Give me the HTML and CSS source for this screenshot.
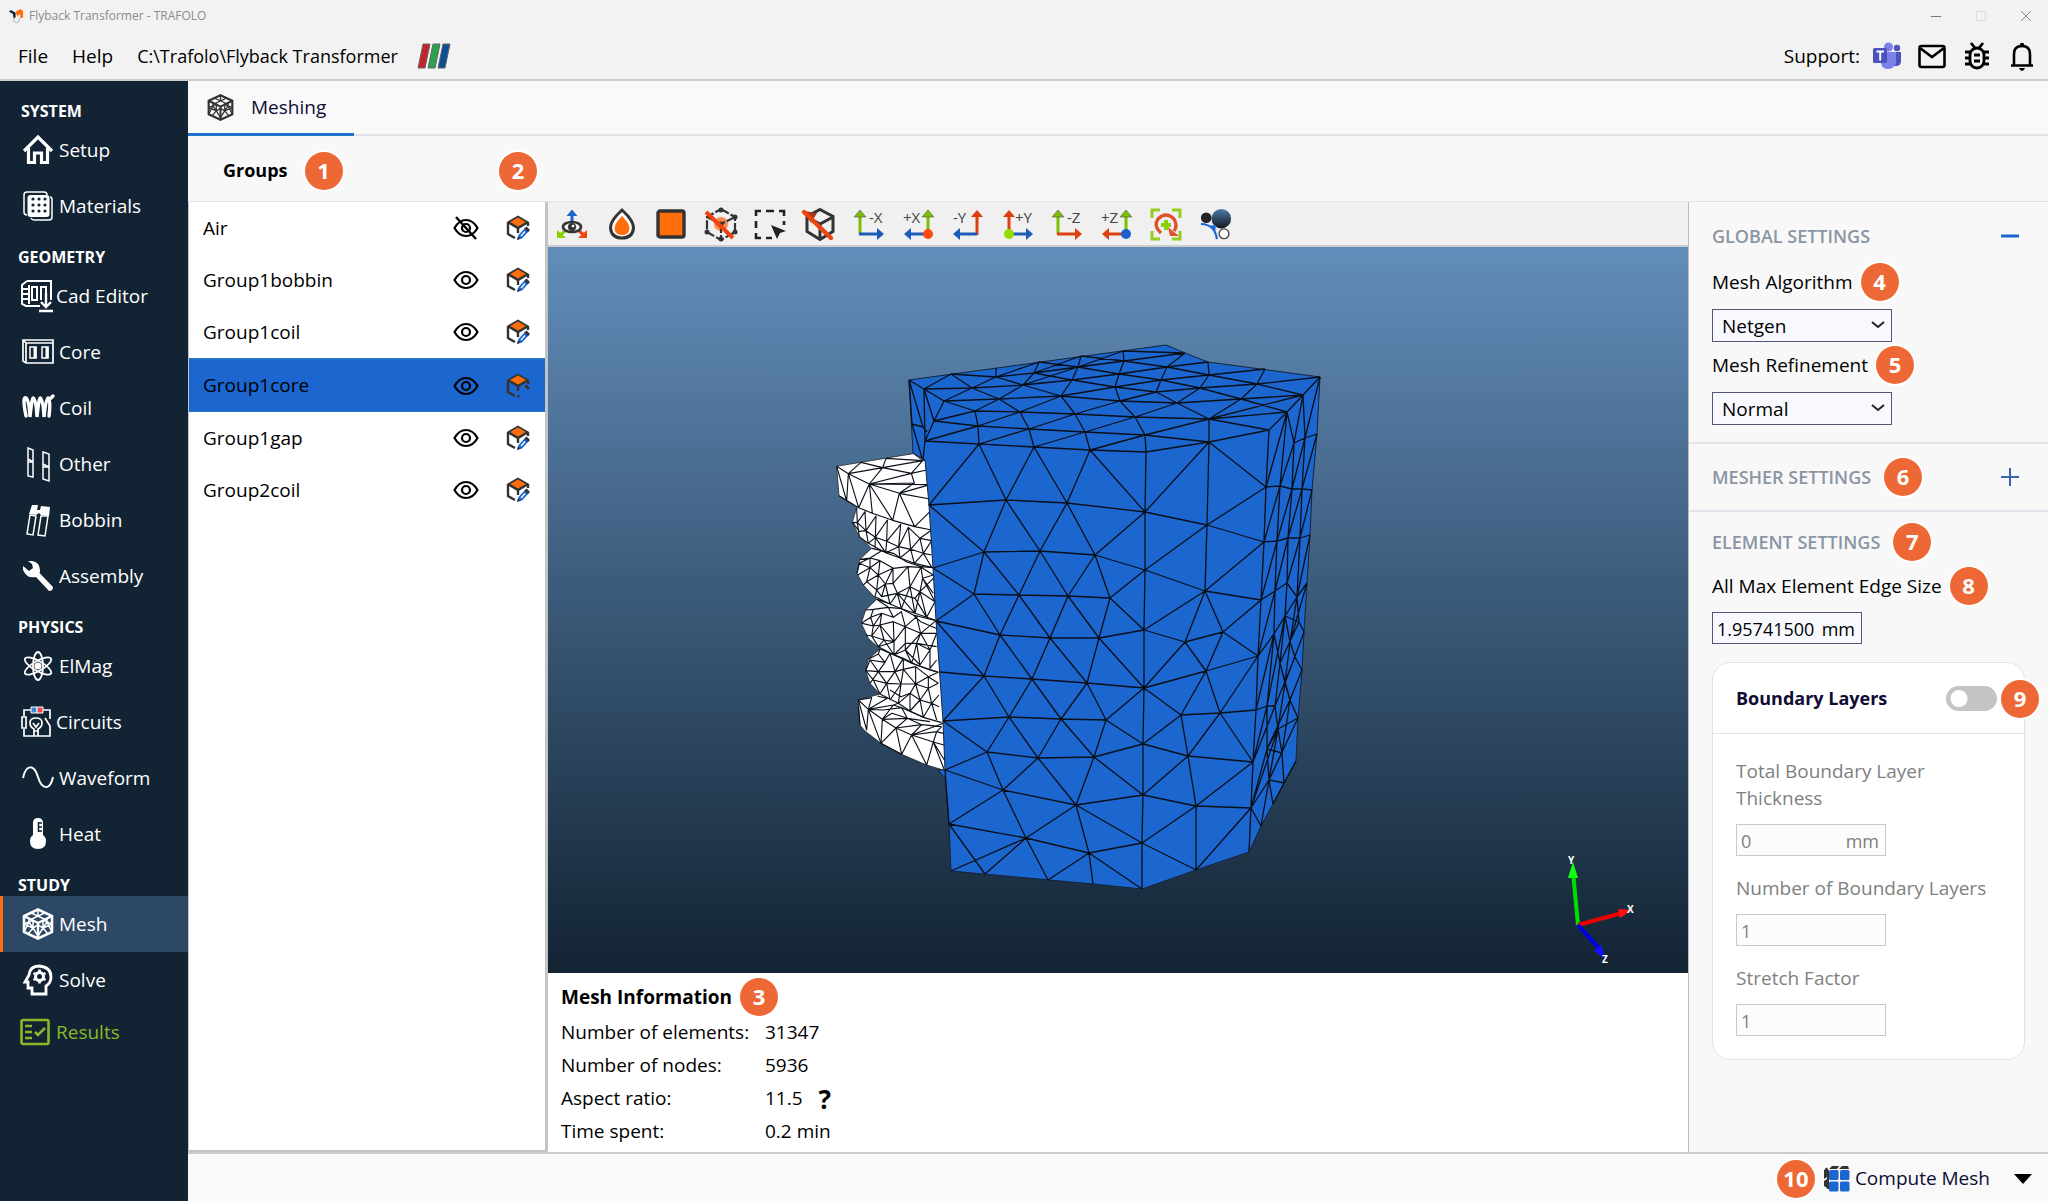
FILE: index.html
```html
<!DOCTYPE html>
<html lang="en">
<head>
<meta charset="utf-8">
<title>Flyback Transformer - TRAFOLO</title>
<link rel="stylesheet" href="styles.css">
</head>
<body>
<svg class="defs" aria-hidden="true">
  <symbol id="i-eye" viewBox="0 0 26 20"><path d="M1.500 10Q6 2 13 2t11.500 8Q20 18 13 18T1.500 10z" fill="none" stroke="currentColor" stroke-width="2.200"/><circle cx="13" cy="10" r="4" fill="none" stroke="currentColor" stroke-width="2.200"/></symbol>
  <symbol id="i-eye-off" viewBox="0 0 26 24"><path d="M1.500 12Q6 4 13 4t11.500 8Q20 20 13 20T1.500 12z" fill="none" stroke="currentColor" stroke-width="2.200"/><circle cx="13" cy="12" r="4" fill="none" stroke="currentColor" stroke-width="2.200"/><path d="M3 1L23 23" stroke="currentColor" stroke-width="2.400"/></symbol>
  <symbol id="i-edit" viewBox="0 0 24 26"><path class="cube-face" d="M2 7v12l10 6V13z"/><path d="M2 7v12l7 4M12 12v6M22 7v4M2 7l10 6 10-6" fill="none" stroke="#333" stroke-width="2.400"/><path d="M12 1.500L21.500 7 12 12.500 2.500 7z" fill="#ff6e0c" stroke="#333" stroke-width="1.600"/><path d="M11 25l1.500-5 7-7.500 3.500 3.500-7 7.500z" fill="#1c66cf"/><path d="M19.500 12.500l3.500 3.500" stroke="#333" stroke-width="3"/><path d="M11 25l1-3.500 2.500 2z" fill="#333"/><path class="cube-face" d="M14.500 20.500l4-4.500 1 1-4 4.500z"/></symbol>
  <symbol id="i-mesh" viewBox="0 0 32 32"><path d="M16 1.500l14 6.500v16L16 30.500 2 24V8z" fill="none" stroke="currentColor" stroke-width="2.600"/><path d="M2 8l14 7 14-7M16 15v15" fill="none" stroke="currentColor" stroke-width="2.400"/><path d="M9 5l7 3 7-3M16 2v6l-7 3.500M16 8l7 3.500M2 16l5-2 4 6 5-3M2 24l5-10 0-4M7 14l4-2 0 8-5 6M11 20l5 8M2 16l9 4M30 16l-5-2-4 6-5-3M30 24l-5-10 0-4M25 14l-4-2 0 8 5 6M21 20l-5 8M30 16l-9 4" fill="none" stroke="currentColor" stroke-width="1.500"/></symbol>
</svg>

<header class="titlebar">
  <svg class="app-icon" viewBox="0 0 16 16"><path d="M2 2l5 3v5L5 11 4 6 0 4z" fill="#0f2133"/><path d="M7 4l5-3 3 2v7l-3 1V7L9 8v2z" fill="#ff6e0c"/><path d="M5 11v3l3 2 3-2v-3" fill="none" stroke="#aaa"/></svg>
  <span class="title">Flyback Transformer - TRAFOLO</span>
  <div class="window-controls">
    <button aria-label="Minimize"><svg viewBox="0 0 12 12"><path d="M1 6.500h10" stroke="#777"/></svg></button>
    <button aria-label="Maximize"><svg viewBox="0 0 12 12"><path d="M1.500 1.500h9v9h-9z" fill="none" stroke="#ddd"/></svg></button>
    <button aria-label="Close"><svg viewBox="0 0 12 12"><path d="M1 1l10 10M11 1L1 11" stroke="#888"/></svg></button>
  </div>
</header>

<nav class="menubar">
  <button class="menu">File</button>
  <button class="menu">Help</button>
  <span class="path">C:\Trafolo\Flyback Transformer</span>
  <svg class="paraview" viewBox="0 0 34 26"><path d="M6 1h7L8 25H1z" fill="#c4212a" stroke="#666"/><path d="M16 1h7l-5 24h-7z" fill="#2ba24c" stroke="#666"/><path d="M26 1h7l-5 24h-7z" fill="#0b4f92" stroke="#666"/></svg>
  <div class="support">
    <span class="support-label">Support:</span>
    <button aria-label="Teams"><svg viewBox="0 0 28 28"><circle cx="24" cy="6" r="3.200" fill="#4b53bc"/><path d="M19 10h9v9q0 5-5 5h-4z" fill="#4b53bc"/><circle cx="15.500" cy="5" r="4.500" fill="#7b83eb"/><path d="M8 10h15v10q-1 7-8 7-6 0-7-6z" fill="#7b83eb"/><rect y="6" width="14" height="15" rx="1.500" fill="#4b53bc"/><path d="M3.500 9.500h7.500M7.200 9.500v9" stroke="#fff" stroke-width="2"/></svg></button>
    <button aria-label="Mail"><svg viewBox="0 0 28 28"><rect x="1.500" y="4" width="25" height="21" rx="2" fill="none" stroke="#000" stroke-width="2.600"/><path d="M2 6l12 9 12-9" fill="none" stroke="#000" stroke-width="2.600"/></svg></button>
    <button aria-label="Report a bug"><svg viewBox="0 0 28 28"><rect x="7" y="6" width="14" height="20" rx="7" fill="none" stroke="#000" stroke-width="2.800"/><path d="M2 10h5M2 16h5M2 22h5M21 10h5M21 16h5M21 22h5M8 1l4 5M20 1l-4 5M11 13h6M11 19h6" stroke="#000" stroke-width="2.800"/></svg></button>
    <button aria-label="Notifications"><svg viewBox="0 0 28 28"><path d="M6 23V12q0-8 8-8t8 8v11M3 23.500h22" fill="none" stroke="#000" stroke-width="2.600"/><circle cx="14" cy="3" r="2.200"/><path d="M11 26h6q-1 3-3 3t-3-3z"/></svg></button>
  </div>
</nav>

<div class="app">
  <nav class="sidebar">
    <section>
      <h2>SYSTEM</h2>
      <a href="#setup"><svg viewBox="0 0 32 32"><path d="M2 17L16 3l14 14M6.500 14v14.500h6V19h7v9.500h6V14" fill="none" stroke="#fff" stroke-width="3.200"/></svg>Setup</a>
      <a href="#materials"><svg viewBox="0 0 32 32"><path d="M5 25q-3 0-3-3V5q0-3 3-3h17q3 0 3 3M9 28q1 2 3 2h15q3 0 3-3V10q0-3-2-3" fill="none" stroke="#fff" stroke-width="1.500"/><rect x="5.500" y="5" width="22" height="22" rx="3" fill="#fff"/><g fill="#122333"><circle cx="11" cy="9" r="1.600"/><circle cx="17" cy="9" r="1.600"/><circle cx="23" cy="9" r="1.600"/><circle cx="11" cy="15" r="1.600"/><circle cx="17" cy="15" r="1.600"/><circle cx="23" cy="15" r="1.600"/><circle cx="11" cy="21" r="1.600"/><circle cx="17" cy="21" r="1.600"/><circle cx="23" cy="21" r="1.600"/></g></svg>Materials</a>
    </section>
    <section>
      <h2>GEOMETRY</h2>
      <a href="#cad" class="tight"><svg viewBox="0 0 32 32"><path d="M6 1h24v19M6 1L1 5v19l4 2h14M1 9h7M1 14h7M1 19h7M8 5v19" fill="none" stroke="#fff" stroke-width="2"/><path d="M11 7h5v13h-5zM20 20V7h5v8" fill="none" stroke="#fff" stroke-width="2"/><path d="M25 13v14M20 22l5 5 5-5M18 31h14" fill="none" stroke="#fff" stroke-width="2.400"/></svg>Cad Editor</a>
      <a href="#core"><svg viewBox="0 0 32 32"><path d="M1 4h30v23H4l-3-2zM1 4l3 3v20M4 7h27" fill="none" stroke="#fff" stroke-width="1.700"/><path d="M8 11h6v11H8zM20 11h6v11h-6z" fill="none" stroke="#fff" stroke-width="1.500"/><path d="M13 11v11M25 11v11" stroke="#fff" stroke-width="3"/></svg>Core</a>
      <a href="#coil"><svg viewBox="0 0 32 32"><path d="M4 24Q0 4 4 6q3 2 4 19 2-19 3-19 3 0 4 19 2-19 3-19 3 0 4 19 2-19 4-19 3 2 1 18M29 6l2-2" fill="none" stroke="#fff" stroke-width="3.400" stroke-linecap="round"/></svg>Coil</a>
      <a href="#other"><svg viewBox="0 0 32 32"><path d="M6 0l5 2v27l-5-1zM21 4l6 2v27l-6-2zM6 11l5 3M6 14l5 0M21 16l6 3M21 19l6 0" fill="none" stroke="#fff" stroke-width="1.500"/></svg>Other</a>
      <a href="#bobbin"><svg viewBox="0 0 32 32"><path d="M10 1h6l-1 5h3l1-4 9 1-1 9-8-1-2-2-3 2-7-1z" fill="#fff"/><path d="M8 11l6 1-3 19-6-1zM19 12h7l-3 20-7-1z" fill="none" stroke="#fff" stroke-width="1.500"/></svg>Bobbin</a>
      <a href="#assembly"><svg viewBox="0 0 32 32"><path d="M10 1q8 1 8 10 0 1-.500 2L31 27q0 4-4 4L14 17q-9 2-13-7V6l6 5 4-3-1-4-4-3z" fill="#fff"/></svg>Assembly</a>
    </section>
    <section>
      <h2>PHYSICS</h2>
      <a href="#elmag"><svg viewBox="0 0 32 32"><g fill="none" stroke="#fff" stroke-width="1.800"><ellipse cx="16" cy="16" rx="5" ry="14"/><ellipse cx="16" cy="16" rx="5" ry="15" transform="rotate(60 16 16)"/><ellipse cx="16" cy="16" rx="5" ry="15" transform="rotate(-60 16 16)"/></g><circle cx="16" cy="16" r="3.600" fill="#fff"/></svg>ElMag</a>
      <a href="#circuits" class="tight"><svg viewBox="0 0 32 32"><path d="M11 4H3v6M3 23v7h26V20l-5-8M21 4h8v9M1 11h4v11H1zM13 30v-7q-4-2-4-6 0-5 6-5t6 5q0 4-4 6v7M12 17l3 4 3-4M13 25h5" fill="none" stroke="#fff" stroke-width="1.700"/><path d="M10 1h6v6h-6z" fill="#3c86d6" stroke="#fff"/><path d="M16 1h6v6h-6z" fill="#ee4b55" stroke="#fff"/></svg>Circuits</a>
      <a href="#waveform"><svg viewBox="0 0 32 32"><path d="M1 16C4 2 12 2 16 15s12 14 15 0" fill="none" stroke="#fff" stroke-width="2"/></svg>Waveform</a>
      <a href="#heat"><svg viewBox="0 0 32 32"><path d="M11 5q0-5 5-5t5 5v12q3 2 3 6 0 8-8 8t-8-8q0-4 3-6z" fill="#fff"/><path d="M16.500 4v10M17 5h3M17 9h3M17 13h3" stroke="#122333" stroke-width="1.500"/></svg>Heat</a>
    </section>
    <section>
      <h2>STUDY</h2>
      <a href="#mesh" class="active"><svg><use href="#i-mesh"/></svg>Mesh</a>
      <a href="#solve"><svg viewBox="0 0 32 32"><path d="M10 30v-6H6v-6H3l4-7Q8 2 17 2q12 1 12 11 0 6-5 9v8z" fill="none" stroke="#fff" stroke-width="2.800"/><circle cx="17.500" cy="12.500" r="4" fill="none" stroke="#fff" stroke-width="3"/><path d="M17.500 5.500v3M17.500 16.500v3M11.500 9l2.500 1.500M21 14.500l2.500 1.500M23.500 9L21 10.500M14 14.500L11.500 16" stroke="#fff" stroke-width="2.600"/></svg>Solve</a>
      <a href="#results" class="results"><svg viewBox="0 0 32 32"><rect x="2.500" y="4" width="27" height="24" rx="1.500" fill="none" stroke="currentColor" stroke-width="2.600"/><path d="M6 10h7M6 16h7M6 22h7M16 16l3 3 7-7" fill="none" stroke="currentColor" stroke-width="2.600"/></svg>Results</a>
    </section>
  </nav>

  <main class="content">
    <div class="tabs"><button class="tab"><svg><use href="#i-mesh"/></svg>Meshing</button></div>
    <div class="groups-head"><h1>Groups</h1><span class="badge">1</span><span class="badge last">2</span></div>

    <div class="workspace">
      <ul class="groups">
        <li><span>Air</span><button aria-label="Show Air"><svg class="off"><use href="#i-eye-off"/></svg></button><button aria-label="Edit Air"><svg><use href="#i-edit"/></svg></button></li>
        <li><span>Group1bobbin</span><button aria-label="Hide Group1bobbin"><svg><use href="#i-eye"/></svg></button><button aria-label="Edit Group1bobbin"><svg><use href="#i-edit"/></svg></button></li>
        <li><span>Group1coil</span><button aria-label="Hide Group1coil"><svg><use href="#i-eye"/></svg></button><button aria-label="Edit Group1coil"><svg><use href="#i-edit"/></svg></button></li>
        <li class="selected"><span>Group1core</span><button aria-label="Hide Group1core"><svg><use href="#i-eye"/></svg></button><button aria-label="Edit Group1core"><svg><use href="#i-edit"/></svg></button></li>
        <li><span>Group1gap</span><button aria-label="Hide Group1gap"><svg><use href="#i-eye"/></svg></button><button aria-label="Edit Group1gap"><svg><use href="#i-edit"/></svg></button></li>
        <li><span>Group2coil</span><button aria-label="Hide Group2coil"><svg><use href="#i-eye"/></svg></button><button aria-label="Edit Group2coil"><svg><use href="#i-edit"/></svg></button></li>
      </ul>

      <div class="center">
        <div class="toolbar">
          <button aria-label="Rotation mode"><svg viewBox="0 0 32 32"><path d="M16 14V5" stroke="#1c66cf" stroke-width="3"/><path d="M10.500 8L16 1.500 21.500 8z" fill="#1c66cf"/><path d="M9 23l-5 4" stroke="#8bd000" stroke-width="3"/><path d="M1 22v8h9z" fill="#8bd000"/><path d="M23 23l5 4" stroke="#ee4410" stroke-width="3"/><path d="M31 22v8h-9z" fill="#ee4410"/><ellipse cx="16" cy="19" rx="9" ry="5" fill="none" stroke="#333" stroke-width="2.600"/><circle cx="16" cy="19" r="4" fill="#333"/><circle cx="17" cy="18" r="1.300" fill="#fff"/></svg></button>
          <button aria-label="Opacity"><svg viewBox="0 0 32 32"><path d="M16 2Q4 13 4.500 20q1 10 11.500 10t11.500-10Q28 13 16 2z" fill="#fff" stroke="#333" stroke-width="3"/><path d="M16 8Q8 16 8.500 21q1 6 7.500 6t7.500-6Q24 16 16 8z" fill="#ff6e0c"/></svg></button>
          <button aria-label="Surface"><svg viewBox="0 0 32 32"><rect x="3" y="3" width="26" height="26" rx="2" fill="#ff6e0c" stroke="#333" stroke-width="3.400"/></svg></button>
          <button aria-label="Hide volume mesh"><svg viewBox="0 0 32 32"><circle cx="16" cy="16" r="7" fill="#ff8a50"/><path d="M16 1l14 8v15l-14 8L2 24V9zM2 9l14 7 14-7M16 16v15" fill="none" stroke="#333" stroke-width="2.200" stroke-dasharray="9 2"/><g fill="#333"><circle cx="16" cy="2" r="2.500"/><circle cx="30" cy="9" r="2.500"/><circle cx="30" cy="24" r="2.500"/><circle cx="16" cy="31" r="2.500"/><circle cx="2" cy="24" r="2.500"/><circle cx="16" cy="16" r="2.500"/></g><path d="M1 4l27 26" stroke="#ee4410" stroke-width="4"/></svg></button>
          <button aria-label="Box select"><svg viewBox="0 0 32 32"><path d="M2 8V3h5M12 3h8M25 3h5v5M30 13v4M2 13v7M2 25v5h5M12 30h6" fill="none" stroke="#222" stroke-width="2.600"/><path d="M17 17l15 6-6 2-3 6z" fill="#222"/></svg></button>
          <button aria-label="Hide solid"><svg viewBox="0 0 32 32"><path d="M16 1.500l13 7v15l-13 8-13-8v-15zM3 9l13 7 13-7M16 16v15" fill="none" stroke="#333" stroke-width="3"/><path d="M0 3l13 2-6 10z" fill="#a3371b"/><path d="M0 4l27 26" stroke="#ee4410" stroke-width="4.400" stroke-linecap="round"/></svg></button>
          <button aria-label="View from minus X"><svg viewBox="0 0 32 32"><path d="M7 26V7" stroke="#7cbf00" stroke-width="3"/><path d="M1 9l6-7 6 7z" fill="#7cbf00" stroke="#555" stroke-width=".600"/><path d="M6 26h20" stroke="#1c5cb8" stroke-width="3"/><path d="M24 20l7 6-7 6z" fill="#1c5cb8"/><text x="16" y="15">-X</text></svg></button>
          <button aria-label="View from plus X"><svg viewBox="0 0 32 32"><path d="M25 26V7" stroke="#7cbf00" stroke-width="3"/><path d="M19 9l6-7 6 7z" fill="#7cbf00" stroke="#555" stroke-width=".600"/><path d="M25 26H6" stroke="#1c5cb8" stroke-width="3"/><path d="M8 20l-7 6 7 6z" fill="#1c5cb8"/><circle cx="25" cy="26" r="5" fill="#ff4a10"/><text x="0" y="15">+X</text></svg></button>
          <button aria-label="View from minus Y"><svg viewBox="0 0 32 32"><path d="M25 27V7" stroke="#dd4010" stroke-width="3"/><path d="M19 9l6-7 6 7z" fill="#dd4010"/><path d="M25 26H6" stroke="#1c5cb8" stroke-width="3"/><path d="M8 20l-7 6 7 6z" fill="#1c5cb8"/><text x="1" y="15">-Y</text></svg></button>
          <button aria-label="View from plus Y"><svg viewBox="0 0 32 32"><path d="M7 26V7" stroke="#dd4010" stroke-width="3"/><path d="M1 9l6-7 6 7z" fill="#dd4010"/><path d="M7 26h19" stroke="#1c5cb8" stroke-width="3"/><path d="M24 20l7 6-7 6z" fill="#1c5cb8"/><circle cx="7" cy="26" r="5" fill="#94dc00"/><text x="13" y="15">+Y</text></svg></button>
          <button aria-label="View from minus Z"><svg viewBox="0 0 32 32"><path d="M7 26V7" stroke="#7cbf00" stroke-width="3"/><path d="M1 9l6-7 6 7z" fill="#7cbf00" stroke="#555" stroke-width=".600"/><path d="M6 26h20" stroke="#dd4010" stroke-width="3"/><path d="M24 20l7 6-7 6z" fill="#dd4010"/><text x="16" y="15">-Z</text></svg></button>
          <button aria-label="View from plus Z"><svg viewBox="0 0 32 32"><path d="M25 26V7" stroke="#7cbf00" stroke-width="3"/><path d="M19 9l6-7 6 7z" fill="#7cbf00" stroke="#555" stroke-width=".600"/><path d="M25 26H6" stroke="#dd4010" stroke-width="3"/><path d="M8 20l-7 6 7 6z" fill="#dd4010"/><circle cx="25" cy="26" r="5" fill="#1c5fd0"/><text x="0" y="15">+Z</text></svg></button>
          <button aria-label="Reset view"><svg viewBox="0 0 32 32"><path d="M2 10V2h8M22 2h8v8M2 23v8h8M22 31h8v-8" fill="none" stroke="#94cc20" stroke-width="3"/><path d="M11 25Q3 18 8 11q8-8 16 0 4 7 0 12" fill="none" stroke="#e0532a" stroke-width="3.400"/><path d="M18 19l2 9h9z" fill="#e0532a"/><path d="M16 12v10M11 17h10" stroke="#8bd000" stroke-width="4"/></svg></button>
          <button aria-label="Background color"><svg viewBox="0 0 34 36"><defs><linearGradient id="ball" x2="0" y2="1"><stop stop-color="#4d7aa8"/><stop offset="1" stop-color="#101820"/></linearGradient></defs><circle cx="23" cy="12" r="11" fill="url(#ball)"/><circle cx="6" cy="11" r="6" fill="#222"/><circle cx="26" cy="29" r="5.500" fill="#fff" stroke="#444" stroke-width="1.500"/><path d="M0 18q8 0 13 5 4 4 5 12" fill="none" stroke="#1c66cf" stroke-width="2.400"/><path d="M9 20l8-1-1 8z" fill="#1c66cf"/></svg></button>
        </div>

        <div class="viewport">
          <svg viewBox="548 247 1140 726" role="img" aria-label="Meshed transformer core">
            <!-- bobbin and winding -->
            <svg x="820" y="330" width="260" height="460" viewBox="0 0 780 1380">
              <path fill="#fff" stroke="#111" stroke-width="2" d="M50 409L280 371 308 392 330 392 390 1326 320 1305 245 1273 183 1240 135 1203 120 1185 115 1110 180 1092 150 1060 137 1022 145 988 180 957 145 925 124 880 137 840 170 808 130 765 111 730 120 688 155 655 118 620 97 577 110 533 57 497z"/>
              <g class="wire" stroke-width="3.400">
                <path d="M50 409L85 431 148 462 238 490 330 507M85 431L123 397 188 413 85 431M198 385L188 413 274 430 148 462 188 413 308 392 274 430 320 420M274 430L283 459 148 462 330 464M283 459L238 490 330 464M198 385L308 392M50 409L80 513 85 431 116 533 148 462 157 550M148 462L218 571 238 490 284 590 330 545M57 497L116 533 157 550 218 571 284 590 335 600"/>
                <path d="M110 533L112 578 135 545 138 602 168 558 166 622 202 570 200 634 242 583 236 650 265 592 272 658 300 625 310 670 335 632M97 577L112 578 138 602 166 622 200 634 236 650 272 658 310 670 335 675M97 577L118 604 138 602 145 640 166 622 197 668 200 634 236 650 240 684 272 658 283 700 310 670 335 712M112 578L118 620M118 620L145 640 197 668 240 684 283 700 335 712M166 622L165 655M265 592L300 625 335 600M300 625L335 632M236 650L197 668M272 658L240 684"/>
                <path d="M155 655L185 662 220 670 260 696 305 710 340 713M120 688L150 684 185 662M150 684L180 692 220 715 264 710 303 712 340 735M111 730L118 700 150 713 175 735 219 715 219 760 264 710 270 770 303 712 308 745 340 735M118 700L150 684 150 713 180 692 175 735M113 735L150 713M150 713L140 755 175 735 170 780 196 762 219 760 232 790 270 770 300 785 308 745 340 790M130 765L140 755 170 780 185 800 196 762M175 735L196 762 219 715M170 780L165 800 210 822 232 790 244 836 270 770 285 850 300 785 320 862 345 815 308 745M185 800L232 790 285 805 300 785 345 815M170 808L210 822 244 836 285 850 345 870M264 710L219 760M232 790L285 850M340 745L300 785M285 805L320 862M196 762L210 822"/>
                <path d="M170 808L205 832 244 836 280 855 348 872M137 840L160 838 205 832M160 838L152 862 185 850 220 862 244 845 256 890 290 860 302 910 348 872M124 880L152 862 160 888 185 850 180 885 220 875 256 890 302 910 350 910M127 880L160 888 180 885 222 935 220 875M160 888L155 918 180 885 192 930 222 935 256 890 256 960 302 910 290 940 350 950M137 915L155 918 192 930 175 950 222 935 222 975 256 940 290 940 330 960 302 910M155 918L175 950M192 930L222 975 256 960 275 1000 290 940 300 1005 330 960 330 1015 350 990M175 950L222 975 275 1000 330 1020 355 1027M330 960L350 910M256 960L300 1005M205 832L220 862M280 855L302 875 348 895"/>
                <path d="M180 957L210 970 250 985 290 1005 355 1027M145 988L175 972 180 957M175 972L195 997 210 970 225 1025 250 985 250 1018 287 1010 325 1040 355 1027M137 1022L150 990 195 997 175 1025 225 1025 250 1018 287 1062 325 1040 355 1060M137 1022L175 1025 150 990M150 1060L175 1025 200 1060 225 1025 243 1062 250 1018M137 1022L160 1050 200 1060 243 1062 287 1062 325 1075 355 1060M160 1050L180 1092 200 1060 210 1110 243 1062 235 1120 270 1090 287 1062 300 1110 325 1075 335 1120 357 1095M180 1092L235 1120 270 1143 310 1162 365 1178M210 1080L243 1100 270 1090 300 1110 335 1120 357 1130M235 1120L243 1062M270 1090L270 1143 300 1110 310 1162 335 1120 350 1170M287 1010L287 1062M325 1040L325 1075"/>
                <path d="M115 1110L145 1138 187 1168 228 1194 275 1215 340 1236 372 1245M115 1110L155 1103 145 1138 202 1105 172 1098M145 1138L220 1125 235 1120M187 1168L220 1125 245 1133 190 1140 145 1138M187 1168L262 1165 245 1133 310 1162M187 1168L216 1150 262 1165 228 1194 305 1184 262 1165 330 1175M305 1184L275 1215 370 1180M305 1184L365 1190M275 1215L350 1205 370 1210M340 1236L350 1205 365 1190M115 1110L140 1200 145 1138 183 1240 187 1168M187 1168L183 1240 228 1194 245 1273 275 1215 320 1305 340 1236 373 1290M145 1138L140 1200M183 1240L245 1273M340 1236L373 1320M115 1130L120 1185"/>
              </g>
            </svg>
            <!-- selected core -->
            <path fill="#1c66cf" stroke="#14243a" d="M909 380L1166 345 1185 353 1208 362 1320 377 1317 434 1312 490 1310 535 1307 583 1304 632 1302 670 1298 718 1296 761 1284 783 1273 804 1261 826 1249 852 1196 870 1142 889 1093 884 951 871 949 824 945 778 938 770 945 770 943 721 936 621 933 568 929 505 925 460 913 453z"/>
            <g class="wire" stroke-width="1.300">
              <path d="M909 380L924 389 925 441 923 460M909 380L923 427 927 432M912 424L923 427M912 424L922 458M924 389L944 401 934 421 925 441M924 389L934 421M909 380L912 424M924 389L951 374 972 388 996 377 996 368M924 389L972 388 1023 385 996 377 951 374M996 377L1034 373 1039 362 1078 367 1081 356 1124 361 1123 351 1185 353M996 377L1039 362M1034 373L1081 356M1034 373L1023 385 1078 367 1124 361 1185 353M1034 373L1078 367M1078 367L1123 351M1034 373L1072 380 1078 367 1119 374 1124 361 1167 367 1185 353M1023 385L1072 380 1119 374 1167 367 1208 362M944 401L972 388 999 399 1023 385 1061 396 1072 380 1115 387 1119 374 1161 380 1167 367 1209 375 1208 362M944 401L999 399 1061 396 1115 387 1161 380 1209 375 1265 369M934 421L944 401 975 411 999 399 1020 412 1061 396 1120 401 1115 387 1156 392 1161 380 1200 388 1209 375 1257 384 1265 369M934 421L975 411 1020 412 1075 414 1061 396M1020 412L1061 396M1075 414L1120 401 1156 392 1200 388 1257 384 1320 377M925 441L934 421 978 426 975 411M925 441L978 426 1020 412 1029 429 1075 414 1135 417 1120 401 1177 403 1156 392M978 426L1029 429 1085 432 1075 414M1029 429L1075 414M1135 417L1177 403 1200 388 1241 399 1257 384 1303 395 1320 377M1177 403L1241 399 1303 395M925 441L979 444 1034 447 1090 450 1146 452 1209 442 1269 430M979 444L978 426M979 444L1029 429 1034 447 1085 432 1090 450 1145 435 1135 417 1209 419 1177 403M1085 432L1135 417M1085 432L1145 435 1146 452M1145 435L1209 419 1241 399 1287 412 1303 395M1145 435L1209 442 1209 419 1269 430 1287 412 1209 419M1209 419L1303 395"/>
              <path d="M979 444L929 505 1006 500 979 444M1034 447L1006 500 1067 503 1034 447M1090 450L1067 503 1145 512 1090 450M1209 442L1145 512 1207 525 1209 442 1266 487 1207 525 1264 542 1205 591 1207 525 1145 570 1205 591 1261 600M1146 452L1145 512 1145 570 1144 630 1144 688 1143 744 1143 795 1142 843 1142 889M929 505L984 552 1006 500 1040 551 984 552M1040 551L1067 503 1095 555 1040 551M1095 555L1145 512M1095 555L1145 570 1110 598 1095 555 1068 596 1040 551 1019 595 984 552 933 568 974 594 984 552M974 594L936 621 1000 635 974 594 1019 595 1068 596 1110 598 1144 630 1205 591 1223 632 1261 600M1019 595L1000 635 1050 638 1019 595M1068 596L1050 638 1099 638 1068 596M1110 598L1099 638 1144 630 1185 642 1205 591M1185 642L1223 632 1258 656 1206 671 1185 642 1144 688 1099 638 1087 683 1144 688 1206 671 1223 632M936 621L984 676 1000 635 1032 679 984 676 940 672M1032 679L1050 638 1087 683 1032 679M984 676L943 721 1009 717 984 676M1032 679L1009 717 1061 719 1032 679M1087 683L1061 719 1106 720 1087 683M1106 720L1144 688 1181 715 1206 671 1220 713 1258 656M1181 715L1220 713 1256 710M1106 720L1143 744 1181 715 1188 756 1143 744 1094 757 1106 720M1188 756L1220 713 1253 762 1188 756 1143 795 1196 806 1188 756M943 721L987 752 1009 717 1038 758 987 752 945 770M1038 758L1061 719 1094 757 1038 758M945 770L1003 790 987 752M1003 790L1038 758 1076 805 1003 790M1094 757L1076 805 1143 795 1094 757M1253 762L1196 806 1251 808M1196 806L1142 843 1076 805 1089 853 1142 843 1196 870 1196 806M1251 808L1196 870M945 770L949 824 1003 790 1026 838 1076 805M949 824L1026 838 1089 853M949 824L985 874 1026 838 1048 880 1089 853 1093 884M951 871L1026 838M1089 853L1142 889"/>
              <path d="M1269 430L1266 487 1264 542 1261 600 1258 656 1256 710 1253 762 1251 808 1249 852M1287 412L1280 486 1277 541 1275 591 1274 634 1267 706 1267 749 1269 780 1273 804M1303 395L1305 438 1302 489 1300 538 1297 597 1290 642 1285 683 1278 729 1269 780M1287 412L1294 443 1292 489 1288 538 1287 583 1285 616 1280 663 1275 706 1278 729 1282 753 1284 783M1294 443L1305 438 1317 434M1266 487L1280 486 1292 489 1302 489 1312 490M1264 542L1277 541 1288 538 1300 538 1310 535M1261 600L1275 591 1287 583 1297 597 1307 583M1258 656L1274 634 1285 616 1297 597M1266 487L1287 412M1280 486L1294 443 1303 395M1292 489L1305 438 1320 377M1302 489L1317 434M1264 542L1280 486M1277 541L1292 489M1288 538L1302 489M1300 538L1312 490M1261 600L1277 541M1275 591L1288 538M1287 583L1300 538M1297 597L1310 535M1258 656L1275 591M1256 710L1274 634 1280 663 1290 700 1298 718M1267 706L1285 616 1290 642 1295 657 1302 670M1285 616L1299 622 1304 632M1290 642L1307 583M1280 663L1299 622 1297 597M1285 683L1304 632M1275 706L1295 657M1290 700L1302 670M1253 762L1267 706M1256 710L1267 706 1275 706M1251 808L1267 749 1282 753M1251 808L1269 780 1284 783M1251 808L1261 826 1269 780M1253 762L1275 706M1267 749L1290 700M1267 749L1278 729 1298 718M1269 780L1298 718M1273 804L1296 761M1282 753L1290 700 1285 683 1280 663M1251 808L1278 729"/>
            </g>
            <!-- orientation axes -->
            <g fill="none" stroke-width="4"><path d="M1578 925L1573 872" stroke="#0d0"/><path d="M1578 925L1622 913" stroke="#e00"/><path d="M1578 925L1602 952" stroke="#00e"/></g>
            <path d="M1573 862l5 16h-10z" fill="#1f1"/><path d="M1632 910l-14-1 2 9z" fill="#f11"/><path d="M1606 959l-12-8 7-6z" fill="#11f"/>
            <g class="axis-label"><text x="1568" y="864">Y</text><text x="1627" y="913">X</text><text x="1602" y="963">Z</text></g>
          </svg>
        </div>

        <section class="info">
          <h2>Mesh Information<span class="badge">3</span></h2>
          <dl>
            <dt>Number of elements:</dt><dd>31347</dd>
            <dt>Number of nodes:</dt><dd>5936</dd>
            <dt>Aspect ratio:</dt><dd>11.5<button class="help" aria-label="About aspect ratio">?</button></dd>
            <dt>Time spent:</dt><dd>0.2 min</dd>
          </dl>
        </section>
      </div>

      <aside class="settings">
        <section class="global">
          <h2>GLOBAL SETTINGS<button class="fold" aria-label="Collapse"><svg viewBox="0 0 18 18"><path d="M0 9h18" stroke="#1c66cf" stroke-width="3"/></svg></button></h2>
          <div class="label-row"><label for="algorithm">Mesh Algorithm</label><span class="badge">4</span></div>
          <div class="select"><select id="algorithm"><option>Netgen</option></select><svg viewBox="0 0 14 8"><path d="M1 1l6 5 6-5" fill="none" stroke="#222" stroke-width="2"/></svg></div>
          <div class="label-row"><label for="refinement">Mesh Refinement</label><span class="badge">5</span></div>
          <div class="select"><select id="refinement"><option>Normal</option></select><svg viewBox="0 0 14 8"><path d="M1 1l6 5 6-5" fill="none" stroke="#222" stroke-width="2"/></svg></div>
        </section>
        <section class="mesher">
          <h2>MESHER SETTINGS<span class="badge">6</span><button class="fold" aria-label="Expand"><svg viewBox="0 0 18 18"><path d="M0 9h18M9 0v18" stroke="#3a66a8" stroke-width="2"/></svg></button></h2>
        </section>
        <section class="element">
          <h2>ELEMENT SETTINGS<span class="badge">7</span></h2>
          <div class="label-row"><label for="edge">All Max Element Edge Size</label><span class="badge">8</span></div>
          <div class="field"><input id="edge" value="1.95741500"><span>mm</span></div>
          <div class="card">
            <div class="card-head"><label for="layers">Boundary Layers</label><input id="layers" type="checkbox" class="toggle"><span class="badge">9</span></div>
            <div class="card-body">
              <label for="thickness">Total Boundary Layer Thickness</label>
              <div class="field"><input id="thickness" value="0" disabled><span>mm</span></div>
              <label for="count">Number of Boundary Layers</label>
              <div class="field"><input id="count" value="1" disabled></div>
              <label for="stretch">Stretch Factor</label>
              <div class="field"><input id="stretch" value="1" disabled></div>
            </div>
          </div>
        </section>
      </aside>
    </div>

    <footer>
      <span class="badge">10</span>
      <button class="compute"><svg viewBox="0 0 26 26"><path d="M5 3L8 0h7l-2 3zM15 3l3-3h6l1 3zM0 4l3-2v9l-3 2zM0 15l3-2v9l-3-2z" fill="#333"/><path d="M2 2l2 3v18" fill="none" stroke="#333" stroke-width="2"/><g fill="#1c66cf"><rect x="5" y="4" width="9.500" height="10" rx="1.500"/><rect x="16" y="4" width="9.500" height="10" rx="1.500"/><rect x="5" y="15.500" width="9.500" height="10" rx="1.500"/><rect x="16" y="15.500" width="9.500" height="10" rx="1.500"/></g></svg>Compute Mesh</button>
      <button class="more" aria-label="More compute options"><svg viewBox="0 0 18 10"><path d="M0 0h18l-9 10z"/></svg></button>
    </footer>
  </main>
</div>
</body>
</html>
```
FILE: styles.css
```css
* { box-sizing: border-box; margin: 0; padding: 0; }
body {
  min-height: 100vh;
  display: flex;
  flex-direction: column;
  font: 19px/27px "Open Sans", "Noto Sans", sans-serif;
  color: #000;
  background: #f8f8f8;
}
svg { display: block; overflow: visible; }
button, input, select { font: inherit; color: inherit; background: none; border: 0; }
.defs { position: absolute; width: 0; height: 0; }

.titlebar { display: flex; align-items: center; height: 31px; padding-left: 9px; background: #f2f2f2; }
.app-icon { width: 15px; height: 15px; }
.title { margin-left: 5px; font-size: 12px; color: #8c8c8c; }
.window-controls { display: flex; margin-left: auto; }
.window-controls button { width: 45px; display: flex; justify-content: center; }
.window-controls svg { width: 12px; height: 12px; }

.menubar { display: flex; align-items: center; height: 50px; padding: 2px 12px 0 18px; background: #f2f2f2; border-bottom: 2px solid #ccc; }
.menu { margin-right: 24px; }
.path { font-size: 18px; }
.paraview { width: 34px; height: 26px; margin-left: 19px; }
.support { display: flex; align-items: center; gap: 17px; margin-left: auto; }
.support-label { margin-right: -4px; }
.support svg { width: 28px; height: 28px; }

.app { flex: 1; display: grid; grid-template-columns: 188px minmax(0, 1fr); }
.sidebar { background: #122333; color: #fff; padding-top: 7px; }
.sidebar h2 { height: 34px; padding: 12px 0 0 18px; font-size: 16px; line-height: 22px; }
.sidebar section:first-child h2 { padding-left: 21px; }
.sidebar a { display: flex; align-items: center; gap: 5px; height: 56px; padding-left: 22px; color: inherit; text-decoration: none; }
.sidebar .tight { gap: 3px; padding-left: 21px; }
.sidebar svg { width: 32px; height: 32px; }
.sidebar .active { background: #2c4864; border-left: 3px solid #ff6e0c; padding-left: 19px; }
.sidebar .results { height: 48px; padding-left: 19px; color: #8ab828; }

.content { display: flex; flex-direction: column; min-width: 0; }
.tabs { height: 55px; border-bottom: 2px solid #e2e3e9; background: #f9f9f9; }
.tab { display: flex; align-items: center; gap: 17px; width: 166px; height: 55px; padding-left: 19px; font-weight: 500; color: #0f0c35; border-bottom: 3px solid #1f72cc; }
.tab svg { width: 27px; height: 29px; color: #333; }
.groups-head { display: flex; align-items: center; gap: 17px; width: 360px; height: 65px; padding: 4px 11px 0 35px; }
.groups-head h1 { font-size: 18px; }
.groups-head .last { margin-left: auto; }

.badge { flex: none; width: 38px; height: 38px; border-radius: 50%; background: #ed6835; box-shadow: 0 0 0 2px #fff; color: #fff; font: 700 22px/36px "Noto Sans", sans-serif; text-align: center; }

.workspace { flex: 1; display: grid; grid-template-columns: 360px minmax(0, 1fr) 360px; border-top: 1px solid #e0e1ea; }
.groups { list-style: none; display: flex; flex-direction: column; background: #fff; border: solid #c2c4c4; border-width: 0 3px 2px 1px; }
.groups li { display: grid; grid-template-columns: 1fr 26px 24px; column-gap: 27px; align-items: center; height: 52px; padding: 0 15px 0 14px; }
.groups svg { width: 26px; height: 20px; }
.groups svg.off { height: 24px; }
.groups button:last-child svg { width: 24px; height: 26px; }
.groups .selected { --face: none; height: 54px; background: #1c66cf; border: solid #1f76cb; border-width: 2px 0 1px; }
.cube-face { fill: var(--face, #fff); }

.center { display: flex; flex-direction: column; background: #fff; min-width: 0; }
.toolbar { display: flex; align-items: center; justify-content: space-between; width: 100%; max-width: 692px; height: 43px; padding: 0 8px; }
.toolbar svg { width: 32px; height: 32px; }
.toolbar text { font-size: 15px; fill: #444; }
.center { background: linear-gradient(#f0f0f0, #f0f0f0) 0 0 / 100% 43px no-repeat #fff; }
.viewport { flex: 1; min-height: 400px; border-top: 2px solid #ccc; background: linear-gradient(#628dba, #122333); }
.viewport > svg { width: 100%; height: 100%; }
.wire { fill: none; stroke: #0a0f18; stroke-linejoin: round; }
.axis-label { fill: #fff; font-size: 10px; font-weight: 700; }

.info { padding: 5px 13px 4px; }
.info h2 { display: flex; align-items: center; gap: 8px; font-size: 19px; height: 38px; }
.info dl { display: grid; grid-template-columns: 204px 1fr; line-height: 33px; }
.info dd { display: flex; align-items: center; height: 33px; }
.help { margin-left: 16px; font: 700 26px/26px "Noto Sans", sans-serif; }

.settings { border-left: 1px solid #bbb; background: #f8f8f8; }
.settings section { padding: 0 23px; border-bottom: 2px solid #e2e3ea; }
.settings h2 { display: flex; align-items: center; gap: 13px; height: 38px; font-size: 18px; font-weight: 600; color: #8b95a3; }
.fold { margin-left: auto; margin-right: 6px; }
.fold svg { width: 18px; height: 18px; }
.settings .global { height: 242px; padding-top: 15px; }
.settings .mesher { height: 68px; padding-top: 14px; }
.settings .element { padding-top: 11px; border: 0; }
.label-row { display: flex; align-items: center; gap: 8px; height: 38px; }
.global h2 { margin-bottom: 8px; }
.element h2 { margin-bottom: 6px; }
.select { position: relative; width: 180px; height: 33px; margin: 8px 0 4px; }
.select select { appearance: none; width: 100%; height: 100%; padding: 1px 0 0 9px; background: #f8f9fe; border: 1px solid #56547a; border-radius: 0; }
.select svg { position: absolute; right: 7px; top: 12px; width: 14px; height: 8px; pointer-events: none; }
.field { display: flex; align-items: center; width: 150px; height: 32px; padding: 2px 6px 0 4px; font-size: 18px; background: #f8f9fe; border: 1px solid #56547a; }
.field input { flex: 1; min-width: 0; }
.element > .field { margin-top: 7px; }
.card { margin-top: 18px; background: #fff; border: 1px solid #e0e1ea; border-radius: 18px; }
.card-head { position: relative; display: flex; align-items: center; justify-content: space-between; height: 71px; padding: 0 27px 0 23px; border-bottom: 1px solid #e0e1ea; color: #0f0c35; font-size: 18px; font-weight: 700; }
.card-head .badge { position: absolute; right: -15px; top: 17px; }
.toggle { appearance: none; width: 51px; height: 25px; border-radius: 13px; background: radial-gradient(circle at 13px 50%, #fff 8px, #c3c4c5 9px); }
.card-body { padding: 24px 23px 23px; color: #808080; }
.card-body label { display: block; }
.card-body .field { margin: 12px 0 19px; background: #fcfcfc; border-color: #c9c9d1; }
.card-body .field:last-child { margin-bottom: 0; }

footer { display: flex; align-items: center; justify-content: flex-end; height: 50px; padding: 1px 16px 0 0; background: #f9f9f9; border-top: 2px solid #ccc; }
.compute { display: flex; align-items: center; gap: 5px; margin: 0 24px 0 9px; color: #0f0c35; font-weight: 500; }
.compute svg { width: 26px; height: 26px; }
.more svg { width: 18px; height: 10px; }
```
